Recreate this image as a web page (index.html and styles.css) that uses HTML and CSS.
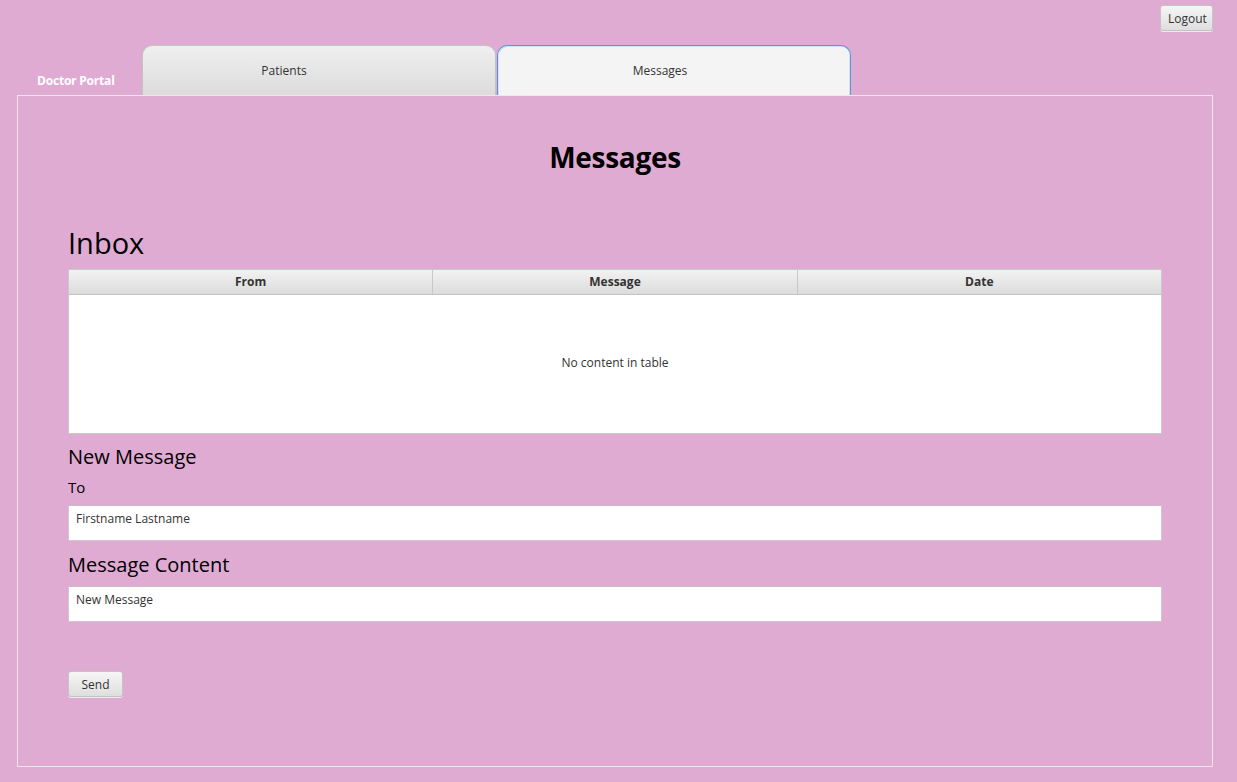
FILE: index.html
```html
<!DOCTYPE html>
<html>
<head>
<meta charset="utf-8">
<link rel="stylesheet" href="styles.css">
</head>
<body>
<div class="app">
  <div class="topbar">
    <button class="btn logout">Logout</button>
  </div>
  <div class="tabrow">
    <div class="brand">Doctor Portal</div>
    <div class="tab first">Patients</div>
    <div class="tab selected">Messages</div>
  </div>
  <div class="content">
    <h1 class="title">Messages</h1>
    <h2 class="inbox">Inbox</h2>
    <div class="table">
      <div class="thead">
        <div class="th">From</div>
        <div class="th">Message</div>
        <div class="th last">Date</div>
      </div>
      <div class="tbody">No content in table</div>
    </div>
    <h3 class="section">New Message</h3>
    <div class="label">To</div>
    <div class="field">Firstname Lastname</div>
    <h3 class="section second">Message Content</h3>
    <div class="field">New Message</div>
    <button class="btn send">Send</button>
  </div>
</div>
</body>
</html>
```

FILE: styles.css
```css
html, body {
  margin: 0;
  padding: 0;
  background: #dfabd3;
  font-family: "Open Sans", "Noto Sans", "DejaVu Sans", sans-serif;
  color: #000;
}
.app {
  width: 1237px;
  height: 782px;
  display: flex;
  flex-direction: column;
  box-sizing: border-box;
  padding-bottom: 15px;
}
.topbar {
  display: flex;
  justify-content: flex-end;
  align-items: flex-start;
  padding: 5px 24px 0 0;
  height: 45px;
  box-sizing: border-box;
}
.btn {
  font-family: inherit;
  font-size: 12px;
  color: #333;
  background: linear-gradient(#f6f6f6, #dedede);
  border: 1px solid #c4c4c4;
  border-radius: 3px;
  box-shadow: 0 1px 0 #f2e6ef;
  height: 26px;
  padding: 0 7px;
  cursor: pointer;
}
.logout { width: 53px; }
.tabrow {
  display: flex;
  align-items: flex-end;
  height: 50px;
}
.brand {
  width: 142px;
  box-sizing: border-box;
  padding-left: 37px;
  color: #fff;
  font-weight: bold;
  font-size: 12px;
  line-height: 16px;
  padding-bottom: 6px;
  letter-spacing: -0.2px;
}
.tab {
  width: 354px;
  height: 50px;
  box-sizing: border-box;
  border: 1px solid #c3c3c3;
  border-bottom: none;
  border-radius: 10px 10px 0 0;
  background: linear-gradient(#efefef, #dcdcdc);
  font-size: 12px;
  color: #333;
  text-align: center;
  padding-top: 17px;
  line-height: 16px;
  margin-right: 1px;
}
.tab.first {
  padding-right: 70px;
}
.tab.selected {
  background: #f4f4f4;
  border: 1px solid #5a94d2;
  border-bottom: none;
  box-shadow: inset 1px 1px 0 #cfe3f6, inset -1px 0 0 #cfe3f6;
  padding-right: 28px;
}
.content {
  flex: 1;
  margin: 0 24px 0 17px;
  border: 1px solid #f3e3ef;
  padding: 44px 50px 0 50px;
  display: flex;
  flex-direction: column;
  align-items: stretch;
}
.title {
  margin: 0;
  text-align: center;
  font-size: 28px;
  line-height: 34px;
  font-weight: bold;
  letter-spacing: -0.3px;
}
.inbox {
  margin: 51px 0 8px 0;
  font-size: 29px;
  font-weight: normal;
  line-height: 36px;
}
.table {
  border: 1px solid #c9c9c9;
  background: #fff;
  height: 165px;
  box-sizing: border-box;
  display: flex;
  flex-direction: column;
}
.thead {
  display: flex;
  height: 24px;
  background: linear-gradient(#f2f2f2, #dcdcdc);
  border-bottom: 1px solid #c3c3c3;
}
.th {
  flex: 1;
  text-align: center;
  font-size: 12px;
  font-weight: bold;
  color: #333;
  line-height: 24px;
  border-right: 1px solid #c8c8c8;
}
.th.last { border-right: none; }
.tbody {
  flex: 1;
  display: flex;
  align-items: center;
  justify-content: center;
  font-size: 12px;
  color: #333;
  padding-bottom: 4px;
}
.section {
  margin: 10px 0 0 0;
  font-size: 20px;
  font-weight: normal;
  line-height: 26px;
}
.section.second { margin-top: 11px; }
.label {
  margin-top: 7px;
  font-size: 15px;
  line-height: 20px;
}
.field {
  margin-top: 8px;
  height: 36px;
  box-sizing: border-box;
  background: #fff;
  border: 1px solid #d4c4d0;
  border-top-color: #c8bcc4;
  padding: 5px 7px 4px 7px;
  font-size: 12px;
  line-height: 16px;
  color: #333;
}
.send {
  margin-top: 49px;
  align-self: flex-start;
  width: 55px;
}
```
